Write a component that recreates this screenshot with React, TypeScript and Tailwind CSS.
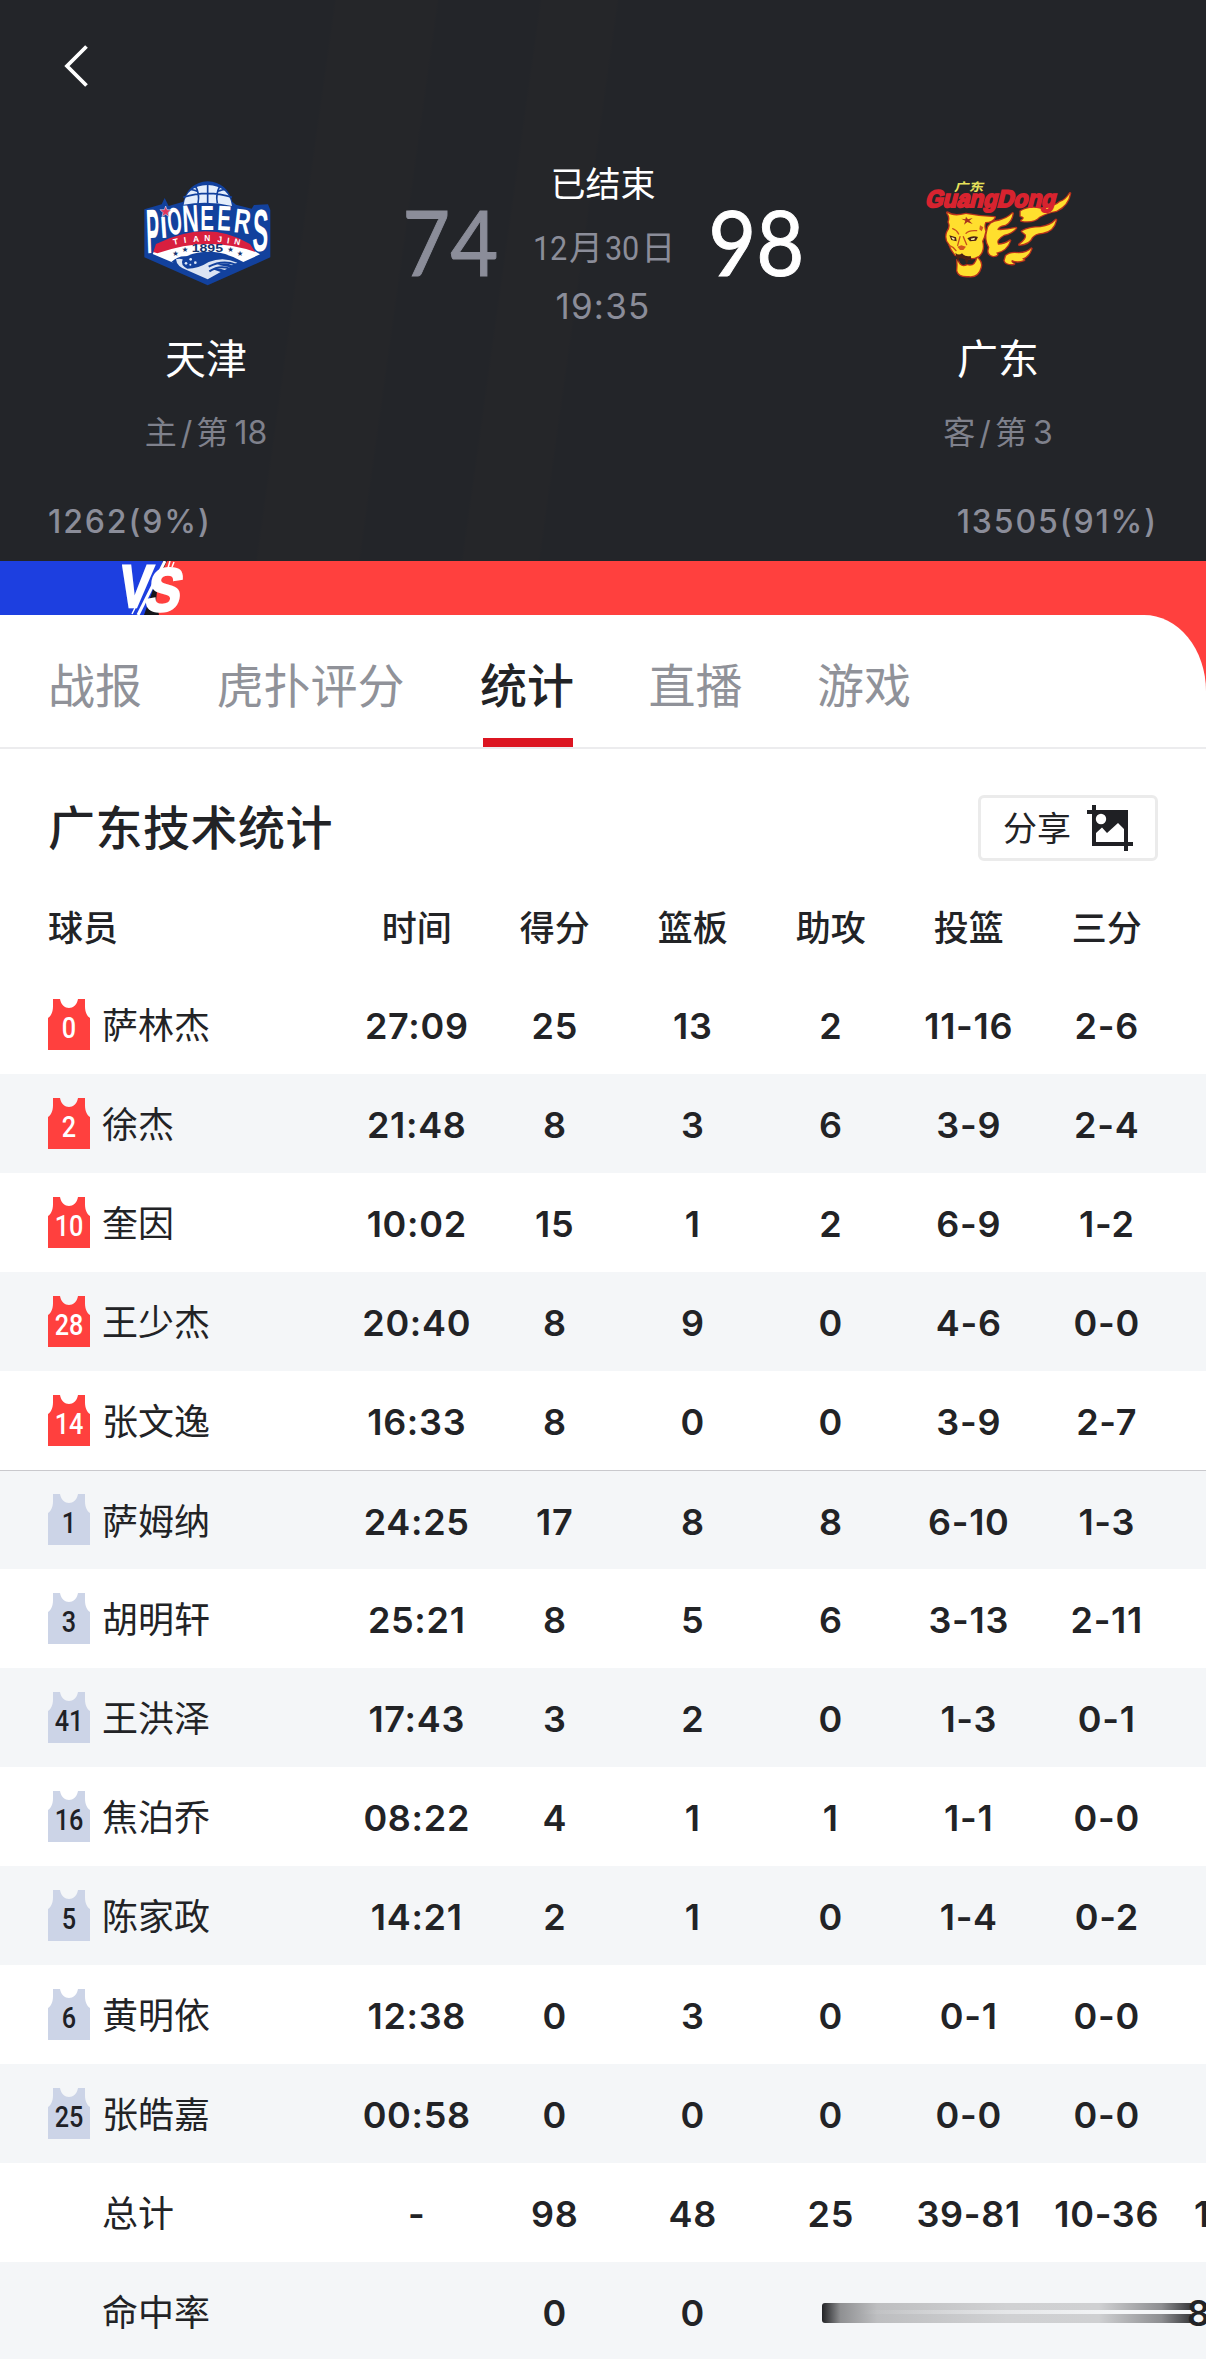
import React from "react";
import clsx from "clsx";

type PlayerRow = {
  num: string;
  name: string;
  starter: boolean;
  stats: string[];
};

const columns = ["时间", "得分", "篮板", "助攻", "投篮", "三分"];

const tabs = ["战报", "虎扑评分", "统计", "直播", "游戏"];

const players: PlayerRow[] = [
  { num: "0", name: "萨林杰", starter: true, stats: ["27:09", "25", "13", "2", "11-16", "2-6"] },
  { num: "2", name: "徐杰", starter: true, stats: ["21:48", "8", "3", "6", "3-9", "2-4"] },
  { num: "10", name: "奎因", starter: true, stats: ["10:02", "15", "1", "2", "6-9", "1-2"] },
  { num: "28", name: "王少杰", starter: true, stats: ["20:40", "8", "9", "0", "4-6", "0-0"] },
  { num: "14", name: "张文逸", starter: true, stats: ["16:33", "8", "0", "0", "3-9", "2-7"] },
  { num: "1", name: "萨姆纳", starter: false, stats: ["24:25", "17", "8", "8", "6-10", "1-3"] },
  { num: "3", name: "胡明轩", starter: false, stats: ["25:21", "8", "5", "6", "3-13", "2-11"] },
  { num: "41", name: "王洪泽", starter: false, stats: ["17:43", "3", "2", "0", "1-3", "0-1"] },
  { num: "16", name: "焦泊乔", starter: false, stats: ["08:22", "4", "1", "1", "1-1", "0-0"] },
  { num: "5", name: "陈家政", starter: false, stats: ["14:21", "2", "1", "0", "1-4", "0-2"] },
  { num: "6", name: "黄明依", starter: false, stats: ["12:38", "0", "3", "0", "0-1", "0-0"] },
  { num: "25", name: "张皓嘉", starter: false, stats: ["00:58", "0", "0", "0", "0-0", "0-0"] },
];

type GlyphProps = {
  char: string;
  x: number;
  y: number;
  w: number;
  h: number;
  skew?: number;
  rotate?: number;
  fill?: string;
  stroke?: string;
};

// one stretched letter of a word mark, w and h are its drawn size
const Glyph: React.FC<GlyphProps> = props => (
  <text
    transform={`translate(${props.x} ${props.y}) rotate(${props.rotate ?? 0}) skewX(${props.skew ?? 0}) scale(${props.w / 65} ${props.h / 70})`}
    fontSize="100"
    fontWeight="700"
    fontFamily="Liberation Sans, sans-serif"
    fill={props.fill ?? "#fff"}
    stroke={props.stroke}
    strokeWidth={props.stroke ? 4 : 0}>
    {props.char}
  </text>
);

const PioneersLogo: React.FC = () => (
  <svg viewBox="0 0 480 375" className="w-[160px] h-[125px]">
    <path
      d="M160 95 Q175 38 233 34 Q292 38 307 95 L318 104 L365 116 L372 105 L414 103 L421 120 L421 262 L233 346 L43 262 L43 118 L95 103 L104 84 L116 108 Z"
      fill="#12419d"
    />
    <path d="M161 104 Q168 48 233 45 Q298 48 306 108 Q233 90 161 104Z" fill="#e4eefc" />
    <g fill="none" stroke="#12419d" strokeWidth="5">
      <path d="M233 42 V100 M160 82 Q233 58 306 82 M196 48 Q210 70 204 100 M270 48 Q256 70 262 100" />
      <path d="M182 58 Q200 62 202 64 M284 58 Q266 62 262 64" />
    </g>
    <Glyph char="P" x={51} y={250} w={38} h={132} rotate={-2} />
    <Glyph char="I" x={93} y={204} w={48} h={64} rotate={-4} />
    <Glyph char="O" x={116} y={195} w={36} h={80} rotate={-6} />
    <Glyph char="N" x={159} y={186} w={44} h={80} rotate={-3} />
    <Glyph char="E" x={211} y={180} w={40} h={74} />
    <Glyph char="E" x={260} y={180} w={40} h={74} rotate={3} />
    <Glyph char="R" x={309} y={186} w={44} h={72} rotate={7} />
    <Glyph char="S" x={366} y={242} w={46} h={125} rotate={2} />
    <path
      d="M107 108 L111 119 L123 120 L114 128 L117 140 L107 133 L96 140 L99 128 L90 119 L103 119Z"
      fill="#e0355c"
      stroke="#cfdcf5"
      strokeWidth="2"
    />
    <path d="M76 236 Q233 146 368 240 L390 253 L340 276 Q233 214 130 278 L68 252Z" fill="#fff" />
    <path d="M78 222 Q233 146 360 222 L376 246 Q233 196 82 250 L70 246Z" fill="#d81f3f" />
    <g fill="#fff" fontFamily="Liberation Sans, sans-serif" fontSize="25" fontWeight="700">
      {[
        { char: "T", x: 131, y: 225, r: -12 },
        { char: "I", x: 163, y: 219, r: -8 },
        { char: "A", x: 190, y: 216, r: -4 },
        { char: "N", x: 223, y: 214, r: 0 },
        { char: "J", x: 262, y: 216, r: 4 },
        { char: "I", x: 290, y: 220, r: 8 },
        { char: "N", x: 311, y: 222, r: 12 },
      ].map(({ char, x, y, r }) => (
        <text key={x} transform={`translate(${x} ${y}) rotate(${r})`}>
          {char}
        </text>
      ))}
    </g>
    <text
      x="185"
      y="246"
      fontSize="35"
      fontWeight="700"
      textLength="94"
      lengthAdjust="spacingAndGlyphs"
      fontFamily="Liberation Sans, sans-serif"
      fill="#15356f">
      1895
    </text>
    <g fill="#15356f" fontSize="22" fontFamily="DejaVu Sans, sans-serif">
      <text x="127" y="257">★</text>
      <text x="155" y="247">★</text>
      <text x="292" y="247">★</text>
      <text x="320" y="257">★</text>
    </g>
    <path d="M124 276 Q150 252 182 262 Q146 270 154 288 Q172 302 204 286 Q240 268 276 262 Q310 260 330 274 L233 324Z" fill="#12419d" />
    <path
      d="M138 268 Q148 264 158 268 Q150 286 172 296 Q206 296 236 276 Q280 258 322 278 L306 286 Q290 276 262 284 L300 292 L284 300 Q266 292 248 298 L272 306 L233 328 L170 300 Q140 290 138 268Z"
      fill="#dbe4f3"
    />
    <g fill="none" stroke="#12419d" strokeWidth="6">
      <path d="M318 284 Q278 268 236 290 M300 296 Q268 284 238 304" />
    </g>
    <g fill="#dce9fb">
      <circle cx="168" cy="280" r="4" />
      <circle cx="182" cy="268" r="4" />
      <circle cx="196" cy="278" r="4" />
      <circle cx="181" cy="284" r="3" />
    </g>
  </svg>
);

const GuangdongLogo: React.FC = () => (
  <svg viewBox="0 0 510 360" className="w-[170px] h-[120px]">
    <g fill="#ffdf2e" stroke="#b8321c" strokeWidth="8" strokeLinejoin="round" paintOrder="stroke">
      <path d="M332 124 Q356 108 392 116 Q434 112 450 96 Q468 90 480 70 Q474 106 440 122 Q412 126 388 140 Q372 158 334 152 Q350 142 332 138Z" />
      <path d="M336 184 Q358 172 392 172 Q422 168 438 150 Q430 184 398 188 Q374 190 366 202 Q358 222 328 224 Q352 206 348 194Z" />
      <path d="M288 258 Q300 246 326 250 Q352 248 364 236 Q356 260 336 266 L342 270 Q322 278 306 270 Q300 276 312 282 Q288 284 284 272Z" />
      <path d="M232 182 Q236 154 268 152 Q292 146 308 130 Q304 156 286 164 Q262 168 262 180 Q284 182 318 174 Q306 190 282 194 Q254 210 264 224 Q284 224 300 212 Q290 242 258 248 Q268 256 250 258 Q230 254 238 232 Q224 208 232 182Z" />
      <path d="M112 128 Q130 142 168 132 Q208 140 254 142 Q248 156 226 156 Q220 168 226 184 Q222 204 216 214 Q224 240 206 258 Q184 270 160 260 L136 254 Q122 238 118 222 Q104 206 112 186 Q124 170 116 156 Q122 142 112 128Z" />
      <path d="M142 270 Q150 296 172 286 Q196 292 202 264 Q216 276 212 292 Q204 322 176 318 Q146 320 142 302 Q144 286 142 270Z" />
    </g>
    <path d="M168 140 L174 148 L188 144 L178 152 L188 162 L172 156 L162 164 L166 152 L154 146 L166 148Z" fill="#a8321c" />
    <g fill="#4a2015">
      <path d="M118 196 L138 202 L140 214 L124 210Z" />
      <path d="M172 205 Q188 195 204 201 L198 212 L180 214Z" />
      <path d="M136 248 Q146 258 156 250 Q166 262 182 258 L186 272 L176 268 L170 284 L164 266 L148 264 L144 278Z" />
    </g>
    <path d="M142 230 L154 226 L168 230 L160 240 L150 240Z M210 166 L220 172 L215 184 L208 178Z" fill="#d0571f" />
    <path d="M124 201 L134 205 L133 210 L127 208Z M182 206 L195 203 L193 209 L184 210Z" fill="#fff3a0" />
    <path
      d="M128 176 Q140 180 146 192 M200 182 Q176 180 168 190 M150 200 L143 226 M160 200 L170 224 M118 226 Q130 230 138 242"
      fill="none"
      stroke="#c8501c"
      strokeWidth="4"
      strokeLinecap="round"
    />
    <text
      fontSize="34"
      fontFamily="Noto Sans CJK SC, sans-serif"
      fontWeight="700"
      fill="#e5e05a"
      textLength="88"
      lengthAdjust="spacingAndGlyphs"
      transform="translate(132 62) skewX(-14)">
      广东
    </text>
    <text
      transform="translate(44 112) skewX(-14)"
      fontSize="72"
      fontWeight="700"
      fontFamily="Liberation Sans, sans-serif"
      textLength="390"
      lengthAdjust="spacingAndGlyphs"
      fill="#d8232f"
      stroke="#d8232f"
      strokeWidth="6">
      GuangDong
    </text>
  </svg>
);

const VsMark: React.FC = () => (
  <svg viewBox="0 0 72 54" className="w-[72px] h-[54px]">
    <path d="M0 0 H46 L28 54 H0Z" fill="#1d3fe0" />
    <path d="M45 0 L26 54 H41 L38 40 L40 20 L49 0Z" fill="#16171c" />
    <g stroke="#fff">
      <path d="M47 0 L20 54" strokeWidth="3" />
      <path d="M52 0 L50 7 M56 1 L54 6 M17 47 L14 53" strokeWidth="1.5" />
    </g>
    <Glyph char="V" x={-1} y={46} w={31} h={42} skew={-8} stroke="#fff" />
    <Glyph char="S" x={25} y={50} w={34} h={43} skew={-12} stroke="#fff" />
  </svg>
);

const ShareIcon: React.FC = () => (
  <svg viewBox="0 0 46 46" className="w-[46px] h-[46px]" fill="#1f2024">
    <path d="M5 0 H9 V5 H41 V37 H46 V41 H41 V46 H37 V41 H5 V9 H0 V5 H5Z" />
    <circle cx="14" cy="14" r="5.2" fill="#fff" />
    <path d="M9 28 L15 22.5 L20 28 L31 18 L37 24 V37 H9Z" fill="#fff" />
  </svg>
);

const Jersey: React.FC<{ num: string; starter: boolean }> = props => (
  <div className="relative w-[42px] h-[51px]">
    <svg
      viewBox="0 0 42 51"
      className={clsx("w-full h-full", props.starter ? "fill-[#ff403e]" : "fill-[#ccd4e7]")}>
      <path d="M5 0 H12 C13 6 17 9 21 9 C25 9 29 6 30 0 H37 V7 C37 13 39 17 42 19 V51 H0 V19 C3 17 5 13 5 7Z" />
    </svg>
    <span
      className={clsx(
        "absolute inset-x-0 top-[13px] text-center text-[29px] leading-[32px] font-medium scale-x-[0.87] font-[Roboto,sans-serif]",
        props.starter ? "text-white" : "text-[#1f2126]"
      )}>
      {props.num}
    </span>
  </div>
);

const Team: React.FC<{ logo: React.ReactNode; name: string; rank: React.ReactNode; className: string }> = props => (
  <div className={clsx("w-[380px] flex flex-col items-center", props.className)}>
    <div className="h-[125px] mt-[38px]">{props.logo}</div>
    <div className="mt-[34px] h-[60px] leading-[60px] text-[41px] text-white">{props.name}</div>
    <div className="mt-6 h-10 leading-10 text-[32px] text-[#7f818c] whitespace-nowrap">{props.rank}</div>
  </div>
);

const Score: React.FC<{ value: string; className: string }> = props => (
  <div
    className={clsx(
      "w-[140px] h-[218px] flex items-center justify-center text-[92px] font-[Lato,sans-serif] [-webkit-text-stroke:1px_currentColor]",
      props.className
    )}>
    <span className="scale-x-90">{props.value}</span>
  </div>
);

const Cell: React.FC<{ children?: React.ReactNode }> = props => (
  <div className="w-[138px] pl-[1.5px] shrink-0 text-center whitespace-nowrap">{props.children}</div>
);

const rowClass = "flex items-center pt-[3px] text-[36px] font-semibold tracking-[0.7px] text-[#222326]";

const App: React.FC = () => (
  <div className="w-[1206px] h-[2359px] overflow-hidden bg-white text-[#222326] font-[Inter,'Noto_Sans_CJK_SC',sans-serif]">
    <header className="h-[561px] flex flex-col bg-[#232529] bg-[linear-gradient(98deg,transparent_26%,#252629_26.2%,#252629_34%,transparent_34.2%,transparent_42%,#252629_42.2%,#252629_48%,transparent_48.2%)]">
      <div className="h-[132px] px-16 flex items-center">
        <svg viewBox="0 0 24 42" className="w-6 h-[42px]" fill="none" stroke="#fff" strokeWidth="3.8">
          <path d="M22.5 1.5 L3 21 L22.5 40.5" />
        </svg>
      </div>
      <div className="flex h-[348px]">
        <Team
          className="pl-8"
          logo={
            <div className="pl-2">
              <PioneersLogo />
            </div>
          }
          name="天津"
          rank={
            <>
              主<span className="mx-1">/</span>第<span className="ml-1.5">18</span>
            </>
          }
        />
        <Score value="74" className="text-[#8b8d99]" />
        <div className="w-[166px] flex flex-col items-center whitespace-nowrap pt-7 text-[#8b8d99]">
          <div className="h-12 leading-[48px] text-[35px] text-white">已结束</div>
          <div className="mt-4 h-12 leading-[48px] text-[34px] flex">
            <span className="font-[Roboto,sans-serif] scale-x-90">12</span>
            月
            <span className="font-[Roboto,sans-serif] scale-x-90">30</span>
            日
          </div>
          <div className="mt-2.5 h-12 leading-[48px] text-[35px] tracking-[1.2px]">19:35</div>
        </div>
        <Score value="98" className="text-white" />
        <Team
          className="pr-9"
          logo={
            <div className="pr-1.5">
              <GuangdongLogo />
            </div>
          }
          name="广东"
          rank={
            <>
              客<span className="mx-1">/</span>第<span className="ml-1.5">3</span>
            </>
          }
        />
      </div>
      <div className="h-[81px] pt-0.5 px-12 flex items-center justify-between text-[32px] font-medium tracking-[1.9px] text-[#8b8d99]">
        <span>1262(9%)</span>
        <span>13505(91%)</span>
      </div>
    </header>

    <div className="h-[54px] flex bg-[#ff403e]">
      <div className="w-[118px] bg-[#1d3fe0]" />
      <VsMark />
    </div>

    <main className="bg-[#ff403e]">
      <div className="rounded-tr-[62px_76px] bg-white">
        <nav className="h-[134px] pl-12 flex gap-[74.5px] border-b-2 border-[#ececee] text-[47px]">
          {tabs.map(tab => (
            <div
              key={tab}
              className={clsx(
                "relative h-[132px] leading-[141px]",
                tab === "统计" ? "pl-px font-medium text-[#222326]" : "text-[#909299]"
              )}>
              {tab}
              {tab === "统计" && <div className="absolute bottom-0 left-1 w-[90px] h-[9px] bg-[#dc1521]" />}
            </div>
          ))}
        </nav>

        <div className="h-[146px] pt-[12px] pl-12 pr-12 flex items-center justify-between">
          <h1 className="text-[47px] font-medium tracking-[0.5px]">广东技术统计</h1>
          <button className="w-[180px] h-[66px] flex items-center justify-center gap-4 border-[3px] border-[#ebebeb] rounded-md text-[34px]">
            分享
            <ShareIcon />
          </button>
        </div>

        <div className="h-[80px] pb-[14px] flex items-center text-[35px] font-medium">
          <div className="w-[347px] pl-12">球员</div>
          {columns.map(col => (
            <Cell key={col}>{col}</Cell>
          ))}
        </div>

        {players.map((player, i) => (
          <div
            key={player.num}
            className={clsx(rowClass, "h-[99px]", {
              "bg-[#f4f6f8]": i % 2 === 1,
              "border-t border-[#c9c9cd]": i === 5,
            })}>
            <div className="w-[347px] shrink-0 pl-12 flex items-center gap-3 font-normal tracking-normal">
              <div className="-mt-1">
                <Jersey num={player.num} starter={player.starter} />
              </div>
              {player.name}
            </div>
            {player.stats.map((stat, j) => (
              <Cell key={j}>{stat}</Cell>
            ))}
          </div>
        ))}

        <div className={clsx(rowClass, "h-[99px] bg-white")}>
          <div className="w-[347px] shrink-0 pl-[102px] font-normal tracking-normal">总计</div>
          {["-", "98", "48", "25", "39-81", "10-36"].map((stat, i) => (
            <Cell key={i}>{stat}</Cell>
          ))}
          <div className="pl-[19px]">1</div>
        </div>
        <div className={clsx(rowClass, "h-[99px] bg-[#f4f6f8]")}>
          <div className="w-[347px] shrink-0 pl-[102px] font-normal tracking-normal">命中率</div>
          <Cell />
          <Cell>0</Cell>
          <Cell>0</Cell>
          <div className="w-[369px] ml-[61px] shrink-0 h-5 flex flex-col rounded-l-[3px] overflow-hidden bg-[linear-gradient(90deg,#222326,#8f9092_5%,#bdbec0_15%,#d0d1d3_50%,#cfd0d2_75%,#8d8e91_92%,#3a3b3e)]">
            <div className="mt-[7px] h-1 bg-[linear-gradient(90deg,transparent_10%,#f4f6f8_80%)]" />
          </div>
          <div className="shrink-0 -ml-1">8</div>
        </div>
      </div>
    </main>
  </div>
);

export default App;
